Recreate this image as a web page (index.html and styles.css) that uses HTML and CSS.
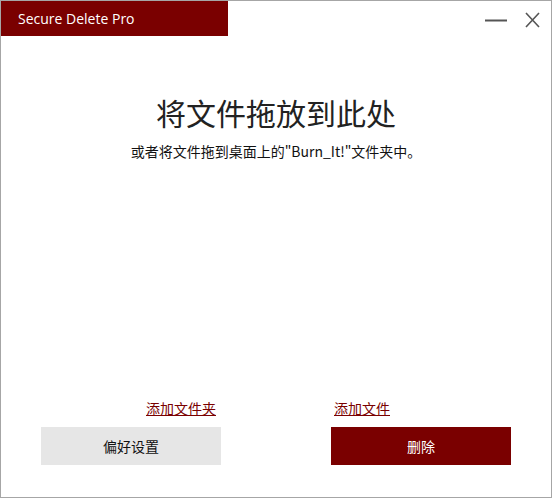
FILE: index.html
```html
<!DOCTYPE html>
<html lang="zh-CN">
<head>
<meta charset="utf-8">
<title>Secure Delete Pro</title>
<link rel="stylesheet" href="styles.css">
</head>
<body>
<div class="window">
  <div class="titlebar">
    <div class="title">Secure Delete Pro</div>
    <div class="controls">
      <svg class="ctl" width="22" height="16" viewBox="0 0 22 16"><line x1="0" y1="8.5" x2="22" y2="8.5" stroke="#555" stroke-width="2"/></svg>
      <svg class="ctl close" width="15" height="16" viewBox="0 0 15 16"><path d="M1 1 L14 15 M14 1 L1 15" stroke="#555" stroke-width="1.6" fill="none"/></svg>
    </div>
  </div>
  <div class="drop">
    <h1 class="heading">将文件拖放到此处</h1>
    <p class="sub">或者将文件拖到桌面上的"Burn_It!"文件夹中。</p>
  </div>
  <div class="links">
    <a class="link left" href="#">添加文件夹</a>
    <a class="link right" href="#">添加文件</a>
  </div>
  <div class="buttons">
    <button class="btn prefs">偏好设置</button>
    <button class="btn del">删除</button>
  </div>
</div>
</body>
</html>
```
FILE: styles.css
```css
* { box-sizing: border-box; }
html, body { margin: 0; padding: 0; background: #fff; }
body {
  font-family: "Noto Sans CJK SC", "Noto Sans", sans-serif;
  color: #222;
}
.window {
  width: 552px;
  height: 498px;
  border: 1px solid #a6a6a6;
  display: flex;
  flex-direction: column;
  background: #fff;
}
.titlebar {
  display: flex;
  justify-content: space-between;
  height: 35px;
}
.title {
  width: 227px;
  background: #7a0000;
  color: #fff;
  font-family: "Open Sans", "Noto Sans", sans-serif;
  font-size: 14px;
  padding-left: 17px;
  line-height: 35px;
}
.controls {
  display: flex;
  align-items: center;
  gap: 18px;
  padding-right: 11px;
  padding-top: 2px;
}
.drop {
  text-align: center;
  flex: 1;
}
.heading {
  margin: 56px 0 0 0;
  font-size: 30px;
  font-weight: 400;
  line-height: 40px;
  color: #222;
}
.sub {
  margin: 9px 0 0 0;
  font-size: 14px;
  line-height: 20px;
  color: #111;
}
.links {
  display: grid;
  grid-template-columns: 180px 180px;
  column-gap: 110px;
  padding-left: 40px;
  height: 29px;
}
.link {
  font-size: 14px;
  line-height: 20px;
  color: #7a0000;
  text-decoration: underline;
}
.left { text-align: right; padding-right: 5px; }
.right { padding-left: 3px; }
.buttons {
  display: grid;
  grid-template-columns: 180px 180px;
  column-gap: 110px;
  padding-left: 40px;
  margin-top: 0;
  margin-bottom: 32px;
}
.btn {
  height: 38px;
  border: none;
  font-family: "Noto Sans CJK SC", sans-serif;
  font-size: 14px;
  padding: 0;
}
.prefs { background: #e6e6e6; color: #111; }
.del { background: #7a0000; color: #fff; }
```
